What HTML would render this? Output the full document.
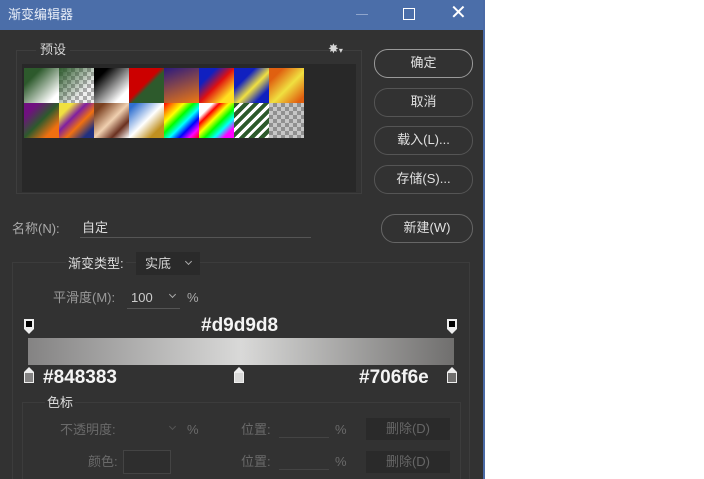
<!DOCTYPE html>
<html><head><meta charset="utf-8"><style>
*{margin:0;padding:0;box-sizing:border-box}
body{width:704px;height:479px;background:#fff;position:relative;overflow:hidden;font-family:"Liberation Sans","Noto Sans CJK SC",sans-serif;color:#d6d6d6;font-size:13px;line-height:16px}
.dlg{position:absolute;left:0;top:0;width:485px;height:479px;background:#323232;border-right:2px solid #4a6aa6;overflow:hidden}
.title{position:absolute;left:0;top:0;width:485px;height:30px;background:#4b6ea9;color:#e8eef8;font-size:13px}
.a{position:absolute}
.btn{position:absolute;border:1.5px solid #9a9a9a;border-radius:14px;text-align:center;color:#e0e0e0;font-size:13px;line-height:25px}
.sw{position:absolute;width:35px;height:35px}
.chk{background:repeating-conic-gradient(#aaa 0 25%,#eee 0 50%) 0 0/8px 8px}
.stop{position:absolute;width:10px}
.big{font-weight:bold;font-size:19px;color:#f4f4f4;line-height:22px}
.dim{color:#6a6a6a}
.chev{position:absolute;width:5px;height:5px;border-right:1.2px solid #aaa;border-bottom:1.2px solid #aaa;transform:rotate(45deg)}
</style></head><body>
<div class="dlg">
<div class="title"><span class="a" style="left:8px;top:7px">渐变编辑器</span>
<span class="a" style="left:356px;top:14px;width:12px;height:1px;background:#8fa5cc"></span>
<span class="a" style="left:403px;top:8px;width:12px;height:12px;border:1.5px solid #fff"></span>
<span class="a" style="left:450px;top:5px;font-size:20px;color:#fff">✕</span></div>
<div class="a" style="left:16px;top:50px;width:346px;height:144px;border:1px solid #3e3e3e"></div>
<div class="a" style="left:22px;top:64px;width:334px;height:128px;background:#282828"></div>
<span class="a" style="left:36px;top:42px;background:#323232;padding:0 4px">预设</span>
<span class="a" style="left:328px;top:41px;font-size:13px">✸<span style="font-size:8px">▾</span></span>
<div class="sw" style="left:24px;top:68px;background:linear-gradient(135deg,#2d5a2c 25%,#fff 85%)"></div>
<div class="sw chk" style="left:59px;top:68px"><div style="width:100%;height:100%;background:linear-gradient(135deg,#2d5a2c,transparent 70%)"></div></div>
<div class="sw" style="left:94px;top:68px;background:linear-gradient(135deg,#000 20%,#fff 80%)"></div>
<div class="sw" style="left:129px;top:68px;background:linear-gradient(135deg,#c00 45%,#2d5a2c 55%)"></div>
<div class="sw" style="left:164px;top:68px;background:linear-gradient(160deg,#2a1a80,#f07a10)"></div>
<div class="sw" style="left:199px;top:68px;background:linear-gradient(135deg,#1020c0 25%,#e01010 50%,#ffe020 80%)"></div>
<div class="sw" style="left:234px;top:68px;background:linear-gradient(135deg,#1020c0 30%,#f0e040 55%,#1020c0 80%)"></div>
<div class="sw" style="left:269px;top:68px;background:linear-gradient(135deg,#e06010 20%,#f0e040 55%,#e06010 90%)"></div>
<div class="sw" style="left:24px;top:103px;background:linear-gradient(135deg,#701080 20%,#2d5a2c 50%,#f07010 80%)"></div>
<div class="sw" style="left:59px;top:103px;background:linear-gradient(135deg,#f0e040 20%,#8020a0 40%,#f07010 60%,#203080 85%)"></div>
<div class="sw" style="left:94px;top:103px;background:linear-gradient(135deg,#7a4020 15%,#f0d0b0 50%,#6a3020 75%,#fff)"></div>
<div class="sw" style="left:129px;top:103px;background:linear-gradient(135deg,#3070d0 10%,#fff 50%,#c09020 80%)"></div>
<div class="sw" style="left:164px;top:103px;background:linear-gradient(135deg,#f00,#f80,#ff0,#0f0,#0ff,#00f,#f0f,#f00)"></div>
<div class="sw" style="left:199px;top:103px;background:linear-gradient(135deg,#fff 20%,#f00 30%,#ff0,#0f0,#0ff,#f0f 85%)"></div>
<div class="sw" style="left:234px;top:103px;background:repeating-linear-gradient(135deg,#2d5a2c 0 4px,#fff 4px 7px)"></div>
<div class="sw chk" style="left:269px;top:103px;opacity:.8"></div>
<div class="btn" style="left:374px;top:49px;width:99px;height:29px">确定</div>
<div class="btn" style="left:374px;top:88px;width:99px;height:29px;border-color:#555">取消</div>
<div class="btn" style="left:374px;top:126px;width:99px;height:29px;border-color:#555">载入(L)...</div>
<div class="btn" style="left:374px;top:165px;width:99px;height:29px;border-color:#555">存储(S)...</div>
<div class="btn" style="left:381px;top:214px;width:92px;height:29px;border-color:#666">新建(W)</div>
<span class="a" style="left:12px;top:221px;color:#aaa">名称(N):</span>
<span class="a" style="left:82px;top:220px;color:#ddd">自定</span>
<div class="a" style="left:80px;top:237px;width:231px;height:1px;background:#555"></div>
<div class="a" style="left:12px;top:262px;width:458px;height:220px;border:1px solid #3c3c3c"></div>
<span class="a" style="left:66px;top:256px;color:#ddd;background:#323232;padding:0 2px">渐变类型:</span>
<div class="a" style="left:136px;top:252px;width:64px;height:23px;background:#2a2a2a"><span class="a" style="left:9px;top:4px">实底</span><span class="chev" style="left:50px;top:7px"></span></div>
<span class="a" style="left:53px;top:290px;color:#999">平滑度(M):</span>
<span class="a" style="left:131px;top:290px;color:#ccc">100</span>
<span class="chev" style="left:170px;top:292px"></span>
<span class="a" style="left:187px;top:290px;color:#aaa">%</span>
<div class="a" style="left:127px;top:308px;width:53px;height:1px;background:#555"></div>
<div class="stop" style="left:24px;top:319px;height:10px;background:#000;border:2px solid #eee"></div>
<div class="a" style="left:24px;top:329px;border-left:5px solid transparent;border-right:5px solid transparent;border-top:5px solid #eee"></div>
<div class="stop" style="left:447px;top:319px;height:10px;background:#000;border:2px solid #eee"></div>
<div class="a" style="left:447px;top:329px;border-left:5px solid transparent;border-right:5px solid transparent;border-top:5px solid #eee"></div>
<span class="a big" style="left:201px;top:315px">#d9d9d8</span>
<div class="a" style="left:28px;top:338px;width:426px;height:27px;background:linear-gradient(90deg,#848383,#d9d9d8 50%,#706f6e)"></div>
<div class="a" style="left:24px;top:367px;border-left:5px solid transparent;border-right:5px solid transparent;border-bottom:5px solid #eee"></div>
<div class="stop" style="left:24px;top:372px;height:11px;background:#848383;border:1.5px solid #eee"></div>
<div class="a" style="left:234px;top:367px;border-left:5px solid transparent;border-right:5px solid transparent;border-bottom:5px solid #eee"></div>
<div class="stop" style="left:234px;top:372px;height:11px;background:#d9d9d8;border:1.5px solid #eee"></div>
<div class="a" style="left:447px;top:367px;border-left:5px solid transparent;border-right:5px solid transparent;border-bottom:5px solid #eee"></div>
<div class="stop" style="left:447px;top:372px;height:11px;background:#706f6e;border:1.5px solid #eee"></div>
<span class="a big" style="left:43px;top:367px">#848383</span>
<span class="a big" style="left:359px;top:367px">#706f6e</span>
<div class="a" style="left:22px;top:402px;width:439px;height:90px;border:1px solid #3c3c3c"></div>
<span class="a" style="left:45px;top:395px;color:#ddd;background:#323232;padding:0 2px">色标</span>
<span class="a dim" style="left:60px;top:422px">不透明度:</span>
<span class="chev" style="left:170px;top:424px;border-color:#555"></span>
<span class="a dim" style="left:187px;top:422px">%</span>
<span class="a dim" style="left:241px;top:422px">位置:</span>
<div class="a" style="left:279px;top:437px;width:50px;height:1px;background:#444"></div>
<span class="a dim" style="left:335px;top:422px">%</span>
<div class="a" style="left:366px;top:418px;width:84px;height:22px;background:#2a2a2a;color:#666;text-align:center;line-height:22px">删除(D)</div>
<span class="a dim" style="left:88px;top:454px">颜色:</span>
<div class="a" style="left:123px;top:450px;width:48px;height:24px;border:1px solid #444;background:#2e2e2e"></div>
<span class="a dim" style="left:241px;top:454px">位置:</span>
<div class="a" style="left:279px;top:469px;width:50px;height:1px;background:#444"></div>
<span class="a dim" style="left:335px;top:454px">%</span>
<div class="a" style="left:366px;top:451px;width:84px;height:22px;background:#2a2a2a;color:#666;text-align:center;line-height:22px">删除(D)</div>
</div>
</body></html>
